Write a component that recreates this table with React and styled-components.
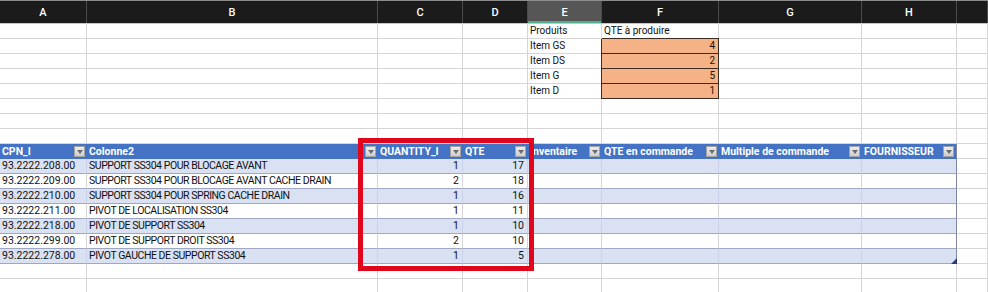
import React from 'react';
import styled, { createGlobalStyle, css } from 'styled-components';

const GlobalStyle = createGlobalStyle`
  html, body { margin: 0; padding: 0; background: #fff; }
  body { font-family: Roboto, "Liberation Sans", sans-serif; overflow: hidden; }
`;

const COLS = '87px 291px 85px 65px 74px 117px 143px 95px 1fr';

const Sheet = styled.div`
  position: relative;
  width: 988px;
  height: 292px;
  overflow: hidden;
  background: #fff;
`;

const HeaderBar = styled.div`
  display: grid;
  grid-template-columns: ${COLS};
  height: 24px;
  box-sizing: border-box;
  border-top: 1px solid #8c8c8c;
  border-bottom: 1px solid #c6c6c6;
  background: #1b1b1b;
`;

const ColLetter = styled.div`
  display: flex;
  align-items: center;
  justify-content: center;
  color: #fff;
  font-size: 11px;
  font-weight: 500;
  border-right: 1px solid #4a4a4a;
  background: ${p => (p.$selected ? '#565656' : 'transparent')};
  box-shadow: ${p => (p.$selected ? 'inset 0 -2px 0 #4fae8f' : 'none')};
`;

const Row = styled.div`
  display: grid;
  grid-template-columns: ${COLS};
  height: 15px;
`;

const kinds = {
  plain: css`
    background: #fff;
    border-right-color: #d6d6d6;
    border-bottom-color: #d6d6d6;
  `,
  orange: css`
    background: #f5b286;
    color: #1a1208;
    border-right-color: #3a2c22;
    border-bottom-color: #3a2c22;
    box-shadow: 0 -1px 0 #3a2c22, -1px 0 0 #3a2c22;
  `,
  band: css`
    background: #d9e1f2;
    border-right-color: #cad3ea;
    border-bottom-color: #9ea8c2;
    font-size: 10.5px;
  `,
  stripe: css`
    background: #fff;
    border-right-color: #d6d6d6;
    border-bottom-color: #9ea8c2;
    font-size: 10.5px;
  `,
};

const Cell = styled.div`
  box-sizing: border-box;
  height: 15px;
  padding: 0 3px 0 2px;
  font-size: 10px;
  line-height: 14px;
  white-space: nowrap;
  color: #111;
  border-right: 1px solid;
  border-bottom: 1px solid;
  text-align: ${p => (p.$right ? 'right' : 'left')};
  ${p => kinds[p.$kind || 'plain']}
  ${p => p.$tight && css`letter-spacing: -0.45px;`}
  ${p => p.$edge && css`border-right-color: #7d879f;`}
`;

const HeadCell = styled.div`
  box-sizing: border-box;
  height: 15px;
  display: flex;
  align-items: center;
  justify-content: space-between;
  padding: 0 2px 0 2px;
  background: #4472c4;
  color: #fff;
  font-weight: 700;
  font-size: 10.5px;
  white-space: nowrap;
  overflow: hidden;
  border-bottom: 1px solid #4472c4;
  ${p => p.$edge && css`border-right: 1px solid #7d879f;`}
`;

const FilterBtn = styled.span`
  flex: none;
  width: 11px;
  height: 11px;
  box-sizing: border-box;
  display: flex;
  align-items: center;
  justify-content: center;
  background: linear-gradient(#ececec, #cfcfcf);
  border: 1px solid #a3a3a3;
  &::after {
    content: '';
    border-left: 3px solid transparent;
    border-right: 3px solid transparent;
    border-top: 4px solid #6a6a6a;
    margin-top: 1px;
  }
`;

const Highlight = styled.div`
  position: absolute;
  left: 358px;
  top: 138px;
  width: 176px;
  height: 133px;
  box-sizing: border-box;
  border: 5px solid #e1061b;
  pointer-events: none;
`;

const ResizeHandle = styled.svg`
  position: absolute;
  left: 951px;
  top: 258px;
`;

const letters = ['A', 'B', 'C', 'D', 'E', 'F', 'G', 'H', ''];
const headers = ['CPN_I', 'Colonne2', 'QUANTITY_I', 'QTE', 'Inventaire', 'QTE en commande', 'Multiple de commande', 'FOURNISSEUR'];

const top = [
  ['Produits', 'QTE à produire', false],
  ['Item GS', 4, true],
  ['Item DS', 2, true],
  ['Item G', 5, true],
  ['Item D', 1, true],
  [null, null, false],
  [null, null, false],
  [null, null, false],
];

const data = [
  ['93.2222.208.00', 'SUPPORT SS304 POUR BLOCAGE AVANT', 1, 17],
  ['93.2222.209.00', 'SUPPORT SS304 POUR BLOCAGE AVANT CACHE DRAIN', 2, 18],
  ['93.2222.210.00', 'SUPPORT SS304 POUR SPRING CACHE DRAIN', 1, 16],
  ['93.2222.211.00', 'PIVOT DE LOCALISATION SS304', 1, 11],
  ['93.2222.218.00', 'PIVOT DE SUPPORT SS304', 1, 10],
  ['93.2222.299.00', 'PIVOT DE SUPPORT DROIT SS304', 2, 10],
  ['93.2222.278.00', 'PIVOT GAUCHE DE SUPPORT SS304', 1, 5],
];

function BlankRow() {
  return (
    <Row>
      {letters.map((_, i) => <Cell key={i} />)}
    </Row>
  );
}

export default function App() {
  return (
    <>
      <GlobalStyle />
      <Sheet>
        <HeaderBar>
          {letters.map((l, i) => (
            <ColLetter key={i} $selected={l === 'E'}>{l}</ColLetter>
          ))}
        </HeaderBar>

        {top.map(([e, f, orange], r) => (
          <Row key={'t' + r}>
            <Cell /><Cell /><Cell /><Cell />
            <Cell>{e}</Cell>
            <Cell $kind={orange ? 'orange' : 'plain'} $right={orange}>{f}</Cell>
            <Cell /><Cell /><Cell />
          </Row>
        ))}

        <Row>
          {headers.map((h, i) => (
            <HeadCell key={i} $edge={i === 7}>
              <span>{h}</span>
              <FilterBtn />
            </HeadCell>
          ))}
          <Cell />
        </Row>

        {data.map(([a, b, c, d], r) => {
          const kind = r % 2 === 0 ? 'band' : 'stripe';
          return (
            <Row key={'d' + r}>
              <Cell $kind={kind}>{a}</Cell>
              <Cell $kind={kind} $tight>{b}</Cell>
              <Cell $kind={kind} $right>{c}</Cell>
              <Cell $kind={kind} $right>{d}</Cell>
              <Cell $kind={kind} />
              <Cell $kind={kind} />
              <Cell $kind={kind} />
              <Cell $kind={kind} $edge />
              <Cell />
            </Row>
          );
        })}

        <BlankRow />
        <BlankRow />

        <Highlight />
        <ResizeHandle width="6" height="6" viewBox="0 0 6 6">
          <path d="M6 0 L6 6 L0 6 Z" fill="#2b3a7a" />
        </ResizeHandle>
      </Sheet>
    </>
  );
}
